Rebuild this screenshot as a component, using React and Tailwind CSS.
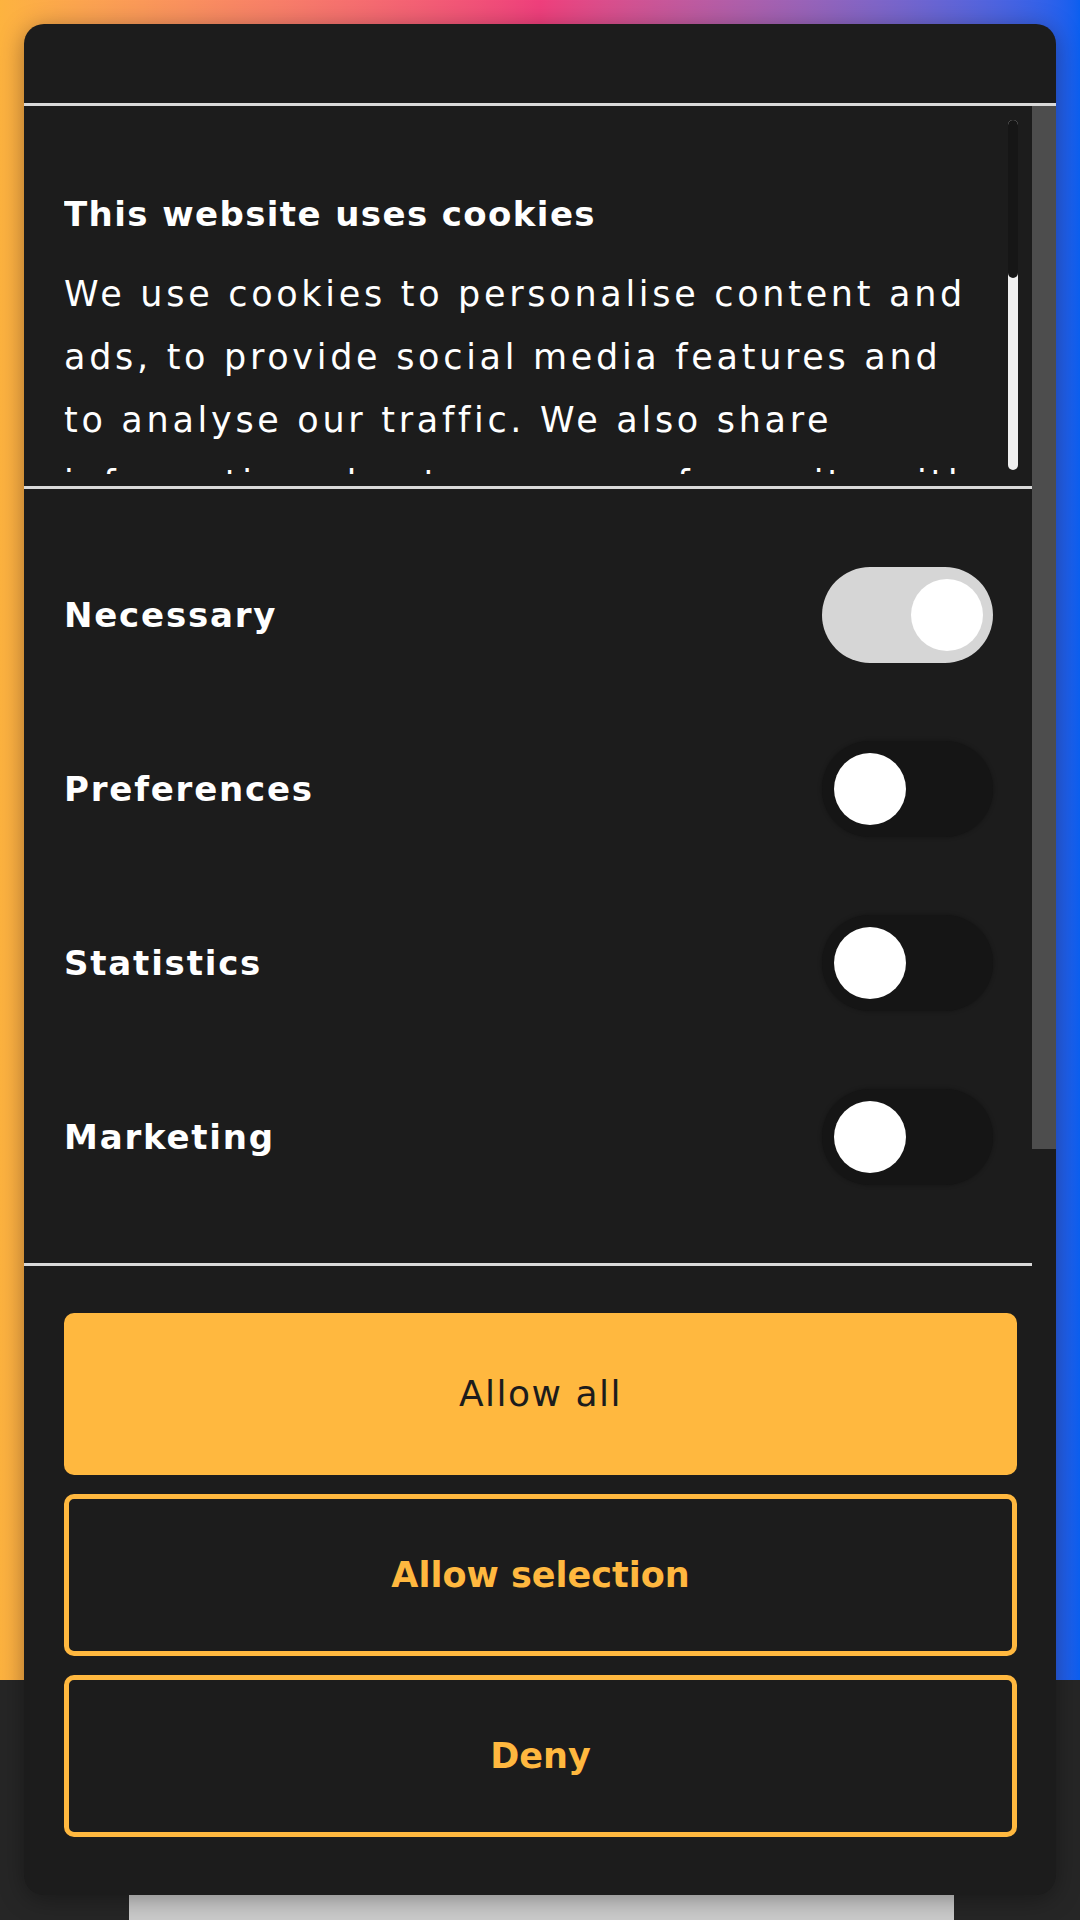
const toggles = [
  { label: "Necessary", on: true },
  { label: "Preferences", on: false },
  { label: "Statistics", on: false },
  { label: "Marketing", on: false },
];

function Toggle({ on }) {
  if (on) {
    return (
      <div className="flex h-[96px] w-[171px] items-center justify-end rounded-full bg-[#d6d6d6] pr-[10px]">
        <div className="h-[72px] w-[72px] rounded-full bg-white" />
      </div>
    );
  }
  return (
    <div className="flex h-[96px] w-[171px] items-center rounded-full bg-[#151515] pl-[12px] shadow-[0_0_4px_rgba(0,0,0,0.35)]">
      <div className="h-[72px] w-[72px] rounded-full bg-white" />
    </div>
  );
}

function Divider() {
  return <div className="h-[3px] shrink-0 bg-[#d9d9d9]" />;
}

function CookieDialog() {
  return (
    <div className="absolute left-6 top-6 flex h-[1871px] w-[1032px] flex-col overflow-hidden rounded-[20px] bg-[#1c1c1c] shadow-[0_4px_24px_rgba(0,0,0,0.35)]">
      <div className="h-[79px] shrink-0" />
      <Divider />

      <div className="flex h-[1160px] shrink-0">
        <div className="flex w-[1008px] flex-col">
          {/* intro text */}
          <div className="h-[380px] pl-[40px] pt-[14px]">
            <div className="flex h-[354px] overflow-hidden">
              <div className="flex-1 pr-[14px] pt-[72px] text-white">
                <h2 className="text-[34px] font-bold leading-[44px] tracking-[1.4px]">
                  This website uses cookies
                </h2>
                <p className="mt-[27px] text-[35px] leading-[63px] tracking-[3.7px]">
                  We use cookies to personalise content and ads, to provide social media features and
                  to analyse our traffic. We also share information about your use of our site with
                  our social media partners.
                </p>
              </div>
              <div className="mr-[14px] h-[350px] w-[10px] shrink-0 rounded-full bg-[#f0f0f0]">
                <div className="h-[158px] rounded-full bg-[#161616]" />
              </div>
            </div>
          </div>
          <Divider />

          {/* consent toggles */}
          <div className="flex h-[774px] flex-col gap-[78px] py-[78px] pl-[40px] pr-[39px]">
            {toggles.map((t) => (
              <div key={t.label} className="flex h-[96px] items-center justify-between">
                <span className="text-[34px] font-bold tracking-[1.8px] text-white">{t.label}</span>
                <Toggle on={t.on} />
              </div>
            ))}
          </div>
          <Divider />
        </div>

        {/* outer scrollbar */}
        <div className="w-[24px]">
          <div className="h-[1043px] bg-[#4d4d4d]" />
        </div>
      </div>

      <div className="flex flex-col gap-[19px] pl-[40px] pr-[39px] pt-[47px]">
        <button className="flex h-[162px] items-center justify-center rounded-[10px] bg-[#ffb83f] text-[36px] tracking-[1.5px] text-[#1c1c1c]">
          Allow all
        </button>
        <button className="flex h-[162px] items-center justify-center rounded-[10px] border-[5px] border-[#ffb83f] text-[35px] font-bold text-[#ffb83f]">
          Allow selection
        </button>
        <button className="flex h-[162px] items-center justify-center rounded-[10px] border-[5px] border-[#ffb83f] text-[35px] font-bold text-[#ffb83f]">
          Deny
        </button>
      </div>
    </div>
  );
}

export default function App() {
  return (
    <div className="relative h-[1920px] w-[1080px] overflow-hidden bg-[#262626] font-['DejaVu_Sans',sans-serif]">
      <div className="h-[1680px] bg-linear-to-r from-[#fdb33f] via-[#ef3f7c] to-[#0a5ff0]" />
      <div className="ml-[129px] mt-[215px] h-[25px] w-[825px] bg-[#cbcbcb]" />
      <CookieDialog />
    </div>
  );
}
